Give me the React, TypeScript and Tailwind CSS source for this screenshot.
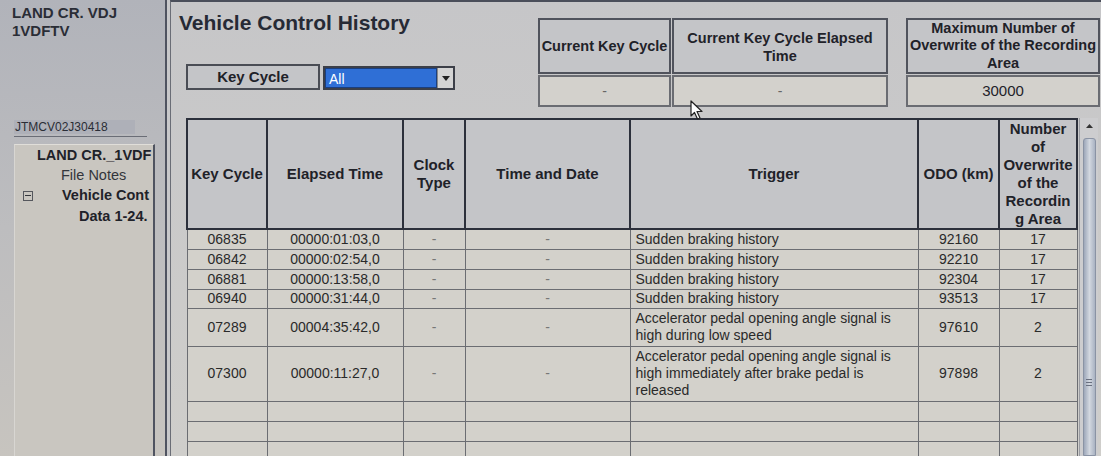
import React from 'react';

type Row = {
  key: string;
  elapsed: string;
  trigger: string[];
  odo: string;
  count: string;
  h: string;
};

const rows: Row[] = [
  { key: '06835', elapsed: '00000:01:03,0', trigger: ['Sudden braking history'], odo: '92160', count: '17', h: 'h-[20px]' },
  { key: '06842', elapsed: '00000:02:54,0', trigger: ['Sudden braking history'], odo: '92210', count: '17', h: 'h-[20px]' },
  { key: '06881', elapsed: '00000:13:58,0', trigger: ['Sudden braking history'], odo: '92304', count: '17', h: 'h-[20px]' },
  { key: '06940', elapsed: '00000:31:44,0', trigger: ['Sudden braking history'], odo: '93513', count: '17', h: 'h-[19px]' },
  {
    key: '07289',
    elapsed: '00004:35:42,0',
    trigger: ['Accelerator pedal opening angle signal is', 'high during low speed'],
    odo: '97610',
    count: '2',
    h: 'h-[38px]',
  },
  {
    key: '07300',
    elapsed: '00000:11:27,0',
    trigger: ['Accelerator pedal opening angle signal is', 'high immediately after brake pedal is', 'released'],
    odo: '97898',
    count: '2',
    h: 'h-[55px]',
  },
];

const headCell = 'border-2 border-[#2c303b] bg-[#c4c5c8] font-bold text-[15px] leading-[18px] text-center align-middle';
const bodyCell = 'border border-[#6b6d72] bg-[#d3d1cb] text-[14px] leading-[17px] text-[#2a2a2a] align-middle';

const Cursor = () => (
  <svg className="absolute left-[690px] top-[100px]" width="14" height="20" viewBox="0 0 14 20">
    <path d="M1 1 L1 16 L4.5 12.5 L7.5 19 L10 18 L7 11.5 L12 11.5 Z" fill="#fff" stroke="#222" strokeWidth="1.2" strokeLinejoin="round" />
  </svg>
);

const App = () => {
  return (
    <div className="relative w-[1101px] h-[456px] flex overflow-hidden font-['Liberation_Sans',Arial,sans-serif] text-[#1f2229] bg-[#c8c8ca]">
      {/* Sidebar */}
      <aside className="w-[167px] shrink-0 flex flex-col bg-gradient-to-b from-[#b1b3ba] via-[#bdbdbf] to-[#c7c4bf] border-r-2 border-[#4f5360]">
        <div className="pl-[12px] pt-[4px] font-bold text-[15px] leading-[18px] text-[#2a2d36]">
          <div>LAND CR. VDJ</div>
          <div>1VDFTV</div>
        </div>
        <div className="mt-[80px] ml-[14px] mr-[18px] border-b border-[#6a6d76] pb-[2px]">
          <div className="text-[12px] leading-[14px] bg-[#aeb0b8] w-[121px] pl-[1px] text-[#2a2d36]">JTMCV02J30418</div>
        </div>
        <div className="mt-[7px] ml-[14px] mr-[10px] flex-1 bg-[#c9c6c0] border-l border-r-2 border-t border-l-[#d8d6d2] border-r-[#4f5360] border-t-[#e0ded9] overflow-hidden whitespace-nowrap">
          <div className="pl-[22px] pt-[1px] font-bold text-[14.5px] leading-[19px]">LAND CR._1VDF</div>
          <div className="pl-[46px] text-[14.5px] leading-[20px] text-[#33353b]">File Notes</div>
          <div className="flex items-center h-[21px]">
            <span className="ml-[8px] w-[10px] h-[10px] border border-[#55575d] flex items-center justify-center">
              <span className="w-[6px] h-px bg-[#33353b]" />
            </span>
            <span className="ml-[29px] font-bold text-[14.5px]">Vehicle Cont</span>
          </div>
          <div className="pl-[64px] font-bold text-[14.5px] leading-[20px]">Data 1-24.</div>
        </div>
      </aside>

      {/* Main */}
      <main className="flex-1 ml-[3px] flex flex-col border-l border-[#6a6d76] border-t-2 border-t-[#4a4e5a] bg-gradient-to-b from-[#c6c6c8] to-[#cfcecb]">
        <div className="flex h-[116px] shrink-0">
          <div className="w-[367px] shrink-0">
            <h1 className="pl-[8px] pt-[9px] font-bold text-[21px] leading-[24px] text-[#262a35]">Vehicle Control History</h1>
            <div className="flex items-center mt-[29px] ml-[15px]">
              <div className="w-[134px] h-[26px] border-2 border-[#4a4d55] bg-[#c4c5c8] flex items-center justify-center font-bold text-[15px]">
                Key Cycle
              </div>
              <div className="ml-[3px] mt-[2px] w-[132px] h-[24px] border-2 border-[#3c3f48] flex bg-[#d6d6d6]">
                <div className="flex-1 bg-[#2f6fd6] text-white text-[14px] leading-[20px] pl-[3px] border border-[#1a3f80]">All</div>
                <div className="w-[16px] bg-[#d4d4d4] border-l border-[#888] flex items-center justify-center">
                  <svg width="8" height="5" viewBox="0 0 8 5">
                    <path d="M0 0 L8 0 L4 5 Z" fill="#222" />
                  </svg>
                </div>
              </div>
            </div>
          </div>

          <div className="flex pt-[16px] gap-[18px]">
            <div className="flex flex-col w-[350px]">
              <div className="flex h-[56px]">
                <div className="w-[133px] border-2 border-[#50535c] bg-[#c4c5c8] flex items-center justify-center font-bold text-[14.5px] leading-[16px] whitespace-nowrap">
                  Current Key Cycle
                </div>
                <div className="flex-1 ml-[1px] border-2 border-[#50535c] bg-[#c4c5c8] flex items-start pt-[9px] justify-center text-center font-bold text-[14.5px] leading-[18px]">
                  Current Key Cycle Elapsed
                  <br />
                  Time
                </div>
              </div>
              <div className="flex h-[32px] mt-[1px]">
                <div className="w-[133px] border-2 border-[#6a6c72] bg-[#d3d1cc] flex items-center justify-center text-[14px] text-[#666]">-</div>
                <div className="flex-1 ml-[1px] border-2 border-[#6a6c72] bg-[#d3d1cc] flex items-center justify-center text-[14px] text-[#666]">-</div>
              </div>
            </div>
            <div className="flex flex-col w-[194px]">
              <div className="h-[56px] border-2 border-[#50535c] bg-[#c4c5c8] flex items-center justify-center text-center font-bold text-[14.5px] leading-[17.5px] whitespace-nowrap">
                Maximum Number of
                <br />
                Overwrite of the Recording
                <br />
                Area
              </div>
              <div className="h-[32px] mt-[1px] border-2 border-[#6a6c72] bg-[#d3d1cc] flex items-center justify-center text-[15px]">
                30000
              </div>
            </div>
          </div>
        </div>

        <div className="flex flex-1 min-h-0 pl-[15px]">
          <div className="w-[892px] overflow-hidden">
            <table className="table-fixed border-collapse w-[890px]">
              <colgroup>
                <col className="w-[80px]" />
                <col className="w-[136px]" />
                <col className="w-[62px]" />
                <col className="w-[165px]" />
                <col className="w-[288px]" />
                <col className="w-[81px]" />
                <col className="w-[78px]" />
              </colgroup>
              <thead>
                <tr className="h-[110px]">
                  <th className={`${headCell} whitespace-nowrap`}>Key Cycle</th>
                  <th className={headCell}>Elapsed Time</th>
                  <th className={headCell}>
                    Clock
                    <br />
                    Type
                  </th>
                  <th className={headCell}>Time and Date</th>
                  <th className={headCell}>Trigger</th>
                  <th className={headCell}>ODO (km)</th>
                  <th className={`${headCell} whitespace-nowrap`}>
                    Number
                    <br />
                    of
                    <br />
                    Overwrite
                    <br />
                    of the
                    <br />
                    Recordin
                    <br />g Area
                  </th>
                </tr>
              </thead>
              <tbody>
                {rows.map((r) => (
                  <tr key={r.key} className={r.h}>
                    <td className={`${bodyCell} text-center`}>{r.key}</td>
                    <td className={`${bodyCell} text-center`}>{r.elapsed}</td>
                    <td className={`${bodyCell} text-center text-[#777]`}>-</td>
                    <td className={`${bodyCell} text-center text-[#777]`}>-</td>
                    <td className={`${bodyCell} pl-[5px] whitespace-nowrap`}>
                      {r.trigger.map((t) => (
                        <div key={t}>{t}</div>
                      ))}
                    </td>
                    <td className={`${bodyCell} text-center`}>{r.odo}</td>
                    <td className={`${bodyCell} text-center`}>{r.count}</td>
                  </tr>
                ))}
                {[0, 1, 2].map((i) => (
                  <tr key={`empty-${i}`} className="h-[20px]">
                    {[0, 1, 2, 3, 4, 5, 6].map((c) => (
                      <td key={c} className={bodyCell} />
                    ))}
                  </tr>
                ))}
              </tbody>
            </table>
          </div>

          {/* Scrollbar */}
          <div className="w-[19px] ml-[1px] flex flex-col items-center bg-[#cdcdcf] border-l border-[#9a9ca2]">
            <svg className="mt-[6px]" width="7" height="4" viewBox="0 0 7 4">
              <path d="M0 4 L7 4 L3.5 0 Z" fill="#333" />
            </svg>
            <div className="mt-[10px] w-[13px] flex-1 rounded-t-[3px] bg-gradient-to-r from-[#9ea8ba] via-[#d3d8e0] to-[#a9b2c2] border border-[#8a93a4] flex flex-col items-center pt-[240px]">
              <div className="flex flex-col gap-[2px]">
                <span className="w-[6px] h-px bg-[#6a7080]" />
                <span className="w-[6px] h-px bg-[#6a7080]" />
                <span className="w-[6px] h-px bg-[#6a7080]" />
              </div>
            </div>
          </div>
        </div>
      </main>

      <Cursor />
    </div>
  );
};

export default App;
